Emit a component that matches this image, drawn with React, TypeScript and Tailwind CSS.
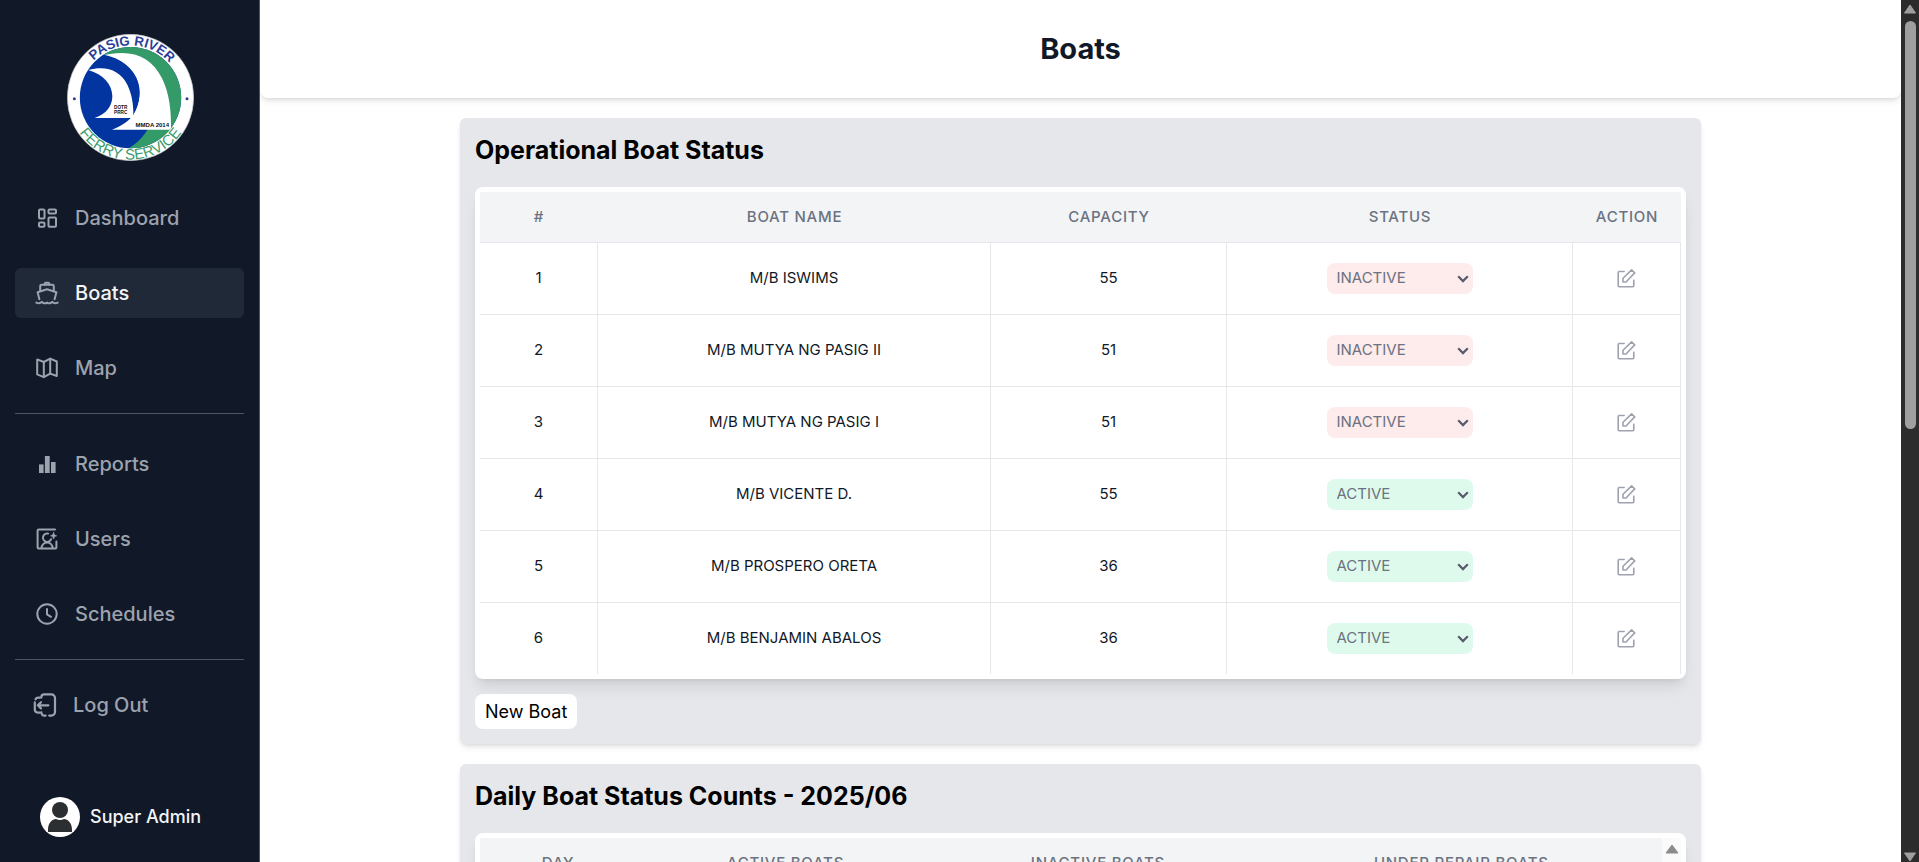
import type { ReactNode } from 'react';

type Boat = { id: number; name: string; capacity: number; status: 'ACTIVE' | 'INACTIVE' };

const boats: Boat[] = [
  { id: 1, name: 'M/B ISWIMS', capacity: 55, status: 'INACTIVE' },
  { id: 2, name: 'M/B MUTYA NG PASIG II', capacity: 51, status: 'INACTIVE' },
  { id: 3, name: 'M/B MUTYA NG PASIG I', capacity: 51, status: 'INACTIVE' },
  { id: 4, name: 'M/B VICENTE D.', capacity: 55, status: 'ACTIVE' },
  { id: 5, name: 'M/B PROSPERO ORETA', capacity: 36, status: 'ACTIVE' },
  { id: 6, name: 'M/B BENJAMIN ABALOS', capacity: 36, status: 'ACTIVE' },
];

function Icon({ children }: { children: ReactNode }) {
  return (
    <svg
      viewBox="0 0 24 24"
      className="size-6 shrink-0 text-[#9ca3af]"
      fill="none"
      stroke="currentColor"
      strokeWidth="2"
      strokeLinecap="round"
      strokeLinejoin="round"
      aria-hidden="true"
    >
      {children}
    </svg>
  );
}

const DashboardIcon = () => (
  <Icon>
    <rect x="4" y="3.500" width="5.500" height="9" rx="1" />
    <rect x="13.500" y="3.500" width="7.500" height="4" rx="1" />
    <rect x="4" y="16.500" width="5.500" height="4.200" rx="1" />
    <rect x="13.500" y="11.500" width="7.500" height="9.200" rx="1" />
  </Icon>
);

const BoatIcon = () => (
  <Icon>
    <path d="M9.800 3.800V2.600a.9.9 0 0 1 .9-.9h2.600a.9.9 0 0 1 .9.9v1.200" />
    <path d="M5.200 9.600V5.200A1.400 1.400 0 0 1 6.600 3.800h10.800a1.400 1.400 0 0 1 1.400 1.400v4.400" />
    <path d="M4.400 18.200 2.600 11.200 12 8.200l9.400 3-1.800 7" />
    <path d="M1.400 21.600c1.500.9 2.900.9 4.400 0l1-.7 1 .7c1.400.9 2.800.9 4.200 0 1.400.9 2.800.9 4.200 0l1-.7 1 .7c1.500.9 2.900.9 4.400 0" />
  </Icon>
);

const MapIcon = () => (
  <Icon>
    <path d="M2.200 3.400 8.800 6 15.200 2.600l6.600 2.900v14.500L15.200 17.600 8.800 21.200 2.200 18.400z" />
    <path d="M8.800 6v15M15.200 2.700v15" />
  </Icon>
);

const ReportsIcon = () => (
  <Icon>
    <g fill="currentColor" stroke="none">
      <rect x="4" y="12.400" width="4.600" height="8.600" />
      <rect x="9.900" y="4" width="4.800" height="17" />
      <rect x="16" y="10" width="4.600" height="11" />
    </g>
  </Icon>
);

const UsersIcon = () => (
  <Icon>
    <path d="M20 2.600H3.600a1 1 0 0 0-1 1v16.800a1 1 0 0 0 1 1h16.800a1 1 0 0 0 1-1V14.500" />
    <path d="M6.600 21a5.500 5.500 0 0 1 11 0" />
    <path d="M13.200 6.600a4.200 4.200 0 1 0 2.900 5.600" />
    <path
      d="M18.600 5.600c.4 2 1 2.700 3 3.200-2 .5-2.600 1.200-3 3.200-.4-2-1-2.700-3-3.200 2-.5 2.600-1.200 3-3.200z"
      fill="currentColor"
      strokeWidth=".8"
    />
  </Icon>
);

const SchedulesIcon = () => (
  <Icon>
    <circle cx="12" cy="12" r="9.700" />
    <path d="M12 7v5.300l4 2.500" />
  </Icon>
);

const LogOutIcon = () => (
  <Icon>
    <g strokeWidth="2.200">
      <path d="M8.400 4.600V4a2.600 2.600 0 0 1 2.600-2.600h7.400A3.600 3.600 0 0 1 22 5v14a3.600 3.600 0 0 1-3.600 3.600h-2.200" />
      <path d="M8.400 19.400a3 3 0 0 0 3 3.200h1.200" />
      <path d="M7 4.600H5.200a3 3 0 0 0-2.700 1.700M1.800 9.400v7.200a3 3 0 0 0 3 3H7" />
      <path d="M15.400 12.300H5.200M8 9.200l-3.200 3.100L8 15.400" />
    </g>
  </Icon>
);

const EditIcon = () => (
  <svg
    viewBox="0 0 20 20"
    className="size-5"
    fill="none"
    stroke="currentColor"
    strokeWidth="1.600"
    strokeLinecap="round"
    strokeLinejoin="round"
    aria-hidden="true"
  >
    <path d="M7.200 2.500H2.200a1 1 0 0 0-1 1v13.200a1 1 0 0 0 1 1h13.600a1 1 0 0 0 1-1V11.200" />
    <path d="M6 13V9.300L14.600.9l3.100 3L9 13z" />
  </svg>
);

function Logo() {
  return (
    <svg viewBox="201 102 381 381" className="size-[127px]" role="img" aria-label="Pasig River Ferry Service">
      <defs>
        <clipPath id="disc">
          <circle cx="391.500" cy="293" r="152" />
        </clipPath>
        <path id="arc-top" d="M 235 292.500 A 156.500 156.500 0 0 1 548 292.500" />
        <path id="arc-bottom" d="M 205.500 292.500 A 186 186 0 0 0 577.500 292.500" />
      </defs>
      <circle cx="391.500" cy="292.500" r="189.500" fill="#fff" stroke="#b9bcc0" strokeWidth="2" />
      <g clipPath="url(#disc)">
        <rect x="230" y="130" width="330" height="330" fill="#0235a0" />
        <path d="M300 172C330 150 350 130 400 130H560V460H350C395 445 425 420 444 386L470 250Z" fill="#349b68" />
        <path d="M300 169C390 145 450 165 486 235C508 280 514 330 513 389H336C365 378 386 364 399 346C425 300 425 255 402 222C380 191 350 174 300 169Z" fill="#fff" />
        <path d="M290 160C345 168 388 190 408 232C424 268 422 310 399 346L380 260Z" fill="#0235a0" />
        <path d="M265 210C320 196 360 212 382 254C396 283 401 315 400 348L396 354H284C319 342 337 318 337 288C336 252 310 224 265 210Z" fill="#fff" />
      </g>
      <g fontFamily="Liberation Sans, Arial, sans-serif" textAnchor="middle">
        <text fontSize="40" fontWeight="700" fill="#2b3f98">
          <textPath href="#arc-top" startOffset="51%">PASIG RIVER</textPath>
        </text>
        <text fontSize="45" fill="#3a9b6d">
          <textPath href="#arc-bottom" startOffset="50%">FERRY SERVICE</textPath>
        </text>
        <g fontWeight="700" fill="#111">
          <text x="362" y="327" fontSize="14">DOTR</text>
          <text x="362" y="341" fontSize="14">PRRC</text>
          <text x="457" y="380" fontSize="18">MMDA 2014</text>
        </g>
      </g>
      <circle cx="223" cy="296" r="4.500" fill="#2b3f98" />
      <circle cx="561" cy="296" r="4.500" fill="#2b3f98" />
    </svg>
  );
}

function NavLink({ icon, label, active }: { icon: ReactNode; label: string; active?: boolean }) {
  return (
    <a
      href="#"
      aria-current={active ? 'page' : undefined}
      className={
        active
          ? 'flex h-[50px] items-center gap-4 rounded-md bg-[#1f2937] px-5 text-xl font-medium text-[#f3f4f6]'
          : 'flex h-[50px] items-center gap-4 rounded-md px-5 text-xl font-medium text-[#9ca3af]'
      }
    >
      {icon}
      {label}
    </a>
  );
}

function Sidebar() {
  return (
    <aside className="flex w-[260px] shrink-0 flex-col border-r border-[#4b5563] bg-[#111827] px-[15px] pb-[25px] pt-[34px]">
      <div className="flex justify-center pl-[2px]">
        <Logo />
      </div>
      <nav className="mt-8 flex flex-col">
        <div className="flex flex-col gap-[25px]">
          <NavLink icon={<DashboardIcon />} label="Dashboard" />
          <NavLink icon={<BoatIcon />} label="Boats" active />
          <NavLink icon={<MapIcon />} label="Map" />
        </div>
        <hr className="mb-[25px] mt-5 border-[#4b5563]" />
        <div className="flex flex-col gap-[25px]">
          <NavLink icon={<ReportsIcon />} label="Reports" />
          <NavLink icon={<UsersIcon />} label="Users" />
          <NavLink icon={<SchedulesIcon />} label="Schedules" />
        </div>
        <hr className="mb-5 mt-5 border-[#4b5563]" />
        <button type="button" className="flex h-[50px] items-center gap-4 px-[18px] text-xl font-medium text-[#9ca3af]">
          <LogOutIcon />
          Log Out
        </button>
      </nav>
      <div className="mt-auto flex items-center gap-[10px] pl-[25px]">
        <svg viewBox="0 0 40 40" className="size-10" role="img" aria-label="Profile picture">
          <circle cx="20" cy="20" r="20" fill="#fff" />
          <circle cx="20" cy="13" r="8" fill="#2b2f31" />
          <path d="M8 35v-2.500C8 26 12.500 22 16 22q4 2 8 0c3.500 0 8 4 8 10.500V35z" fill="#2b2f31" />
        </svg>
        <span className="text-lg font-medium text-[#f3f4f6]">Super Admin</span>
      </div>
    </aside>
  );
}

function StatusSelect({ boat }: { boat: Boat }) {
  return (
    <div className="relative mx-auto w-[146px]">
      <select
        aria-label={`Status of ${boat.name}`}
        defaultValue={boat.status}
        className={
          boat.status === 'ACTIVE'
            ? 'block h-[31px] w-full appearance-none rounded-lg bg-[#defaec] px-[10px] text-[15px] text-[#6b7280]'
            : 'block h-[31px] w-full appearance-none rounded-lg bg-[#feebeb] px-[10px] text-[15px] text-[#6b7280]'
        }
      >
        <option>ACTIVE</option>
        <option>INACTIVE</option>
      </select>
      <svg
        viewBox="0 0 12 8"
        className="pointer-events-none absolute right-1 top-3 h-2 w-3"
        fill="none"
        stroke="#565c68"
        strokeWidth="2.200"
        aria-hidden="true"
      >
        <path d="M1.200 1.300 6 6.100l4.800-4.800" />
      </svg>
    </div>
  );
}

function Panel({ title, children }: { title: string; children: ReactNode }) {
  return (
    <section className="shrink-0 rounded-md bg-[#e5e7eb] p-[15px] shadow-md">
      <h2 className="mb-5 text-[25px] leading-[34px] font-bold text-black">{title}</h2>
      {children}
    </section>
  );
}

const headCell = 'text-[15px] font-medium uppercase tracking-wider text-[#6b7280]';
const bodyCell = 'border-r border-t border-[#e5e7eb] text-center text-[15px] text-[#111827]';

function OperationalPanel() {
  return (
    <Panel title="Operational Boat Status">
      <div className="rounded-lg bg-white p-[5px] shadow-lg">
        <table className="w-full table-fixed border-separate border-spacing-0">
          <colgroup>
            <col className="w-[118px]" />
            <col className="w-[393px]" />
            <col className="w-[236px]" />
            <col className="w-[346px]" />
            <col className="w-[108px]" />
          </colgroup>
          <thead className="bg-[#f3f4f6]">
            <tr className="h-[50px]">
              <th className={headCell}>#</th>
              <th className={headCell}>Boat Name</th>
              <th className={headCell}>Capacity</th>
              <th className={headCell}>Status</th>
              <th className={headCell}>Action</th>
            </tr>
          </thead>
          <tbody>
            {boats.map((boat) => (
              <tr key={boat.id} className="h-[72px]">
                <td className={bodyCell}>{boat.id}</td>
                <td className={bodyCell}>{boat.name}</td>
                <td className={bodyCell}>{boat.capacity}</td>
                <td className={bodyCell}>
                  <StatusSelect boat={boat} />
                </td>
                <td className={bodyCell}>
                  <button type="button" aria-label={`Edit ${boat.name}`} className="mx-auto block text-[#9ca3af]">
                    <EditIcon />
                  </button>
                </td>
              </tr>
            ))}
          </tbody>
        </table>
      </div>
      <button type="button" className="mt-[15px] flex h-[35px] items-center rounded-lg bg-white px-[10px] text-lg text-black">
        New Boat
      </button>
    </Panel>
  );
}

function DailyCountsPanel() {
  return (
    <Panel title="Daily Boat Status Counts - 2025/06">
      <div className="rounded-lg bg-white p-[5px] shadow-lg">
        <div className="flex h-[400px]">
          <table className="h-[50px] flex-1 table-fixed">
            <colgroup>
              <col className="w-[156px]" />
              <col className="w-[300px]" />
              <col className="w-[326px]" />
              <col className="w-[402px]" />
            </colgroup>
            <thead className="bg-[#f3f4f6]">
              <tr className="h-[50px]">
                <th className={headCell}>Day</th>
                <th className={headCell}>Active Boats</th>
                <th className={headCell}>Inactive Boats</th>
                <th className={headCell}>Under Repair Boats</th>
              </tr>
            </thead>
          </table>
          <div className="flex w-[19px] justify-center bg-[#fafafa] pt-[6px]" aria-hidden="true">
            <svg viewBox="0 0 14 10" className="h-[10px] w-[14px]">
              <path d="M7 1 13 9H1Z" fill="#8b8b8b" stroke="#8b8b8b" strokeLinejoin="round" />
            </svg>
          </div>
        </div>
      </div>
    </Panel>
  );
}

function PageScrollbar() {
  return (
    <div className="flex w-[18px] shrink-0 flex-col items-center bg-[#2c2c2c] pt-1" aria-hidden="true">
      <svg viewBox="0 0 14 10" className="h-[10px] w-[14px] shrink-0">
        <path d="M7 1 12.500 9H1.500Z" fill="#9f9f9f" stroke="#9f9f9f" strokeLinejoin="round" />
      </svg>
      <div className="mt-[7px] h-[408px] w-[11px] rounded-full bg-[#9f9f9f]" />
      <svg viewBox="0 0 14 10" className="mt-auto h-[10px] w-[14px] shrink-0">
        <path d="M7 9 12.500 1H1.500Z" fill="#9f9f9f" stroke="#9f9f9f" strokeLinejoin="round" />
      </svg>
    </div>
  );
}

export default function App() {
  return (
    <div className="flex h-screen overflow-hidden bg-white font-['Inter',sans-serif]">
      <Sidebar />
      <main className="flex min-w-0 flex-1 flex-col overflow-hidden">
        <header className="flex h-[98px] shrink-0 items-center justify-center rounded-b-lg bg-white shadow-md">
          <h1 className="text-[29px] leading-9 font-bold text-[#111827]">Boats</h1>
        </header>
        <div className="flex flex-col gap-5 px-[200px] pt-5">
          <OperationalPanel />
          <DailyCountsPanel />
        </div>
      </main>
      <PageScrollbar />
    </div>
  );
}
